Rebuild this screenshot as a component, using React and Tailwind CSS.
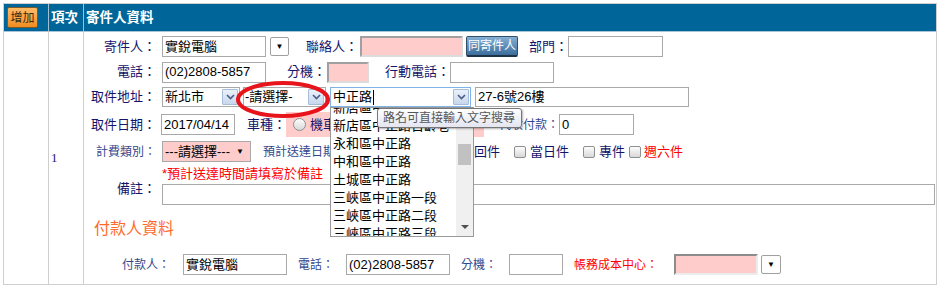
import React from "react";

const Chevron = () => (
  <svg width="9" height="6" viewBox="0 0 9 6">
    <path d="M1 1 L4.5 4.5 L8 1" fill="none" stroke="#4a5f86" strokeWidth="1.6" />
  </svg>
);

function SelArrow() {
  return (
    <span className="flex items-center justify-center w-[16px] h-[16px] border border-[#a7bcd9] bg-linear-to-b from-[#eaf1fa] to-[#c8d7ee] rounded-[1px]">
      <Chevron />
    </span>
  );
}

function Drop({ cls }) {
  return (
    <span className={"flex items-center justify-center border border-[#a0a0a0] bg-white rounded-[2px] text-[8px] text-black " + cls}>▼</span>
  );
}

function Check() {
  return <span className="inline-block w-[12px] h-[12px] rounded-[2px] border border-[#8e8f8f] bg-linear-to-b from-[#fdfdfd] to-[#d8d8d8]" />;
}

const items = [
  "新店區中正路",
  "新店區中正路百齡巷",
  "永和區中正路",
  "中和區中正路",
  "土城區中正路",
  "三峽區中正路一段",
  "三峽區中正路二段",
  "三峽區中正路三段",
];

export default function App() {
  return (
    <div className="relative w-[941px] h-[289px] bg-white overflow-hidden font-['Liberation_Sans','Noto_Sans_CJK_TC',sans-serif]">
      <div className="pt-[3px] pl-[3px]">
        <div className="w-[934px] border border-[#cfcfcf] flex flex-col">
          {/* header */}
          <div className="flex h-[28px] bg-[#006699] border-b border-[#a8c4d6]">
            <div className="w-[45px] border-r border-[#9fbfd3] pl-[3px] pt-[3px]">
              <div className="w-[31px] h-[21px] flex items-center justify-center border border-[#7a5a2a] rounded-[2px] bg-linear-to-b from-[#ffbb66] to-[#f28c1c] text-[12px] leading-[14px] text-[#3a2a10]">
                增加
              </div>
            </div>
            <div className="w-[35px] border-r border-[#9fbfd3] flex items-center pl-[2px] text-white font-bold text-[13.5px] leading-[16px]">
              項次
            </div>
            <div className="flex-1 flex items-center pl-[2px] text-white font-bold text-[13.5px] leading-[16px]">
              寄件人資料
            </div>
          </div>

          {/* body */}
          <div className="flex h-[252px]">
            <div className="w-[45px] border-r border-[#cfcfcf]" />
            <div className="w-[35px] border-r border-[#cfcfcf] flex items-center pl-[2px] font-['Liberation_Serif',serif] text-[13px] text-[#1a1a80]">
              1
            </div>
            <div className="w-[852px] flex flex-col">
              {/* R1 */}
              <div className="h-[29px] flex items-center text-[13px] leading-[16px] whitespace-nowrap">
                <span className="w-[72px] text-right text-[#14146b]">寄件人：</span>
                <span className="ml-[6px] w-[104px] h-[21px] border border-[#a9a9a9] px-[2px] flex items-center text-black">實銳電腦</span>
                <Drop cls="ml-[4px] w-[19px] h-[19px]" />
                <span className="ml-[17px] text-[#14146b]">聯絡人：</span>
                <span className="ml-[2px] w-[103px] h-[21px] border-2 border-t-[#a0a0a0] border-l-[#a0a0a0] border-b-[#dcdcdc] border-r-[#dcdcdc] bg-[#ffcccc]" />
                <span className="ml-[3px] w-[52px] h-[21px] flex items-center justify-center border border-[#33506a] border-b-[#1d3347] border-b-2 rounded-[2px] bg-linear-to-b from-[#86b0d4] to-[#3a6e9c] text-white text-[12px]">同寄件人</span>
                <span className="ml-[11px] text-[#14146b]">部門：</span>
                <span className="w-[95px] h-[21px] border border-[#a9a9a9]" />
              </div>
              {/* R2 */}
              <div className="h-[22px] flex items-center text-[13px] leading-[16px] whitespace-nowrap">
                <span className="w-[72px] text-right text-[#14146b]">電話：</span>
                <span className="ml-[6px] w-[104px] h-[21px] border border-[#a9a9a9] px-[2px] flex items-center text-black">(02)2808-5857</span>
                <span className="ml-[21px] text-[#14146b]">分機：</span>
                <span className="ml-[1px] w-[42px] h-[21px] border-2 border-t-[#a0a0a0] border-l-[#a0a0a0] border-b-[#dcdcdc] border-r-[#dcdcdc] bg-[#ffcccc]" />
                <span className="ml-[16px] text-[#14146b]">行動電話：</span>
                <span className="w-[104px] h-[21px] border border-[#a9a9a9]" />
              </div>
              {/* R3 */}
              <div className="h-[28px] flex items-center text-[13px] leading-[16px] whitespace-nowrap">
                <span className="w-[72px] text-right text-[#14146b]">取件地址：</span>
                <span className="ml-[6px] w-[78px] h-[20px] border border-[#a9a9a9] flex items-center justify-between pl-[2px] pr-[1px] text-black">
                  新北市
                  <SelArrow />
                </span>
                <span className="ml-[3px] w-[83px] h-[20px] border border-[#a9a9a9] flex items-center justify-between pl-[1px] pr-[1px] text-black">
                  -請選擇-
                  <SelArrow />
                </span>
                <span className="relative ml-[4px] w-[141px] h-[20px] border border-[#7eb4ea] flex items-center justify-between pl-[2px] pr-[1px] text-black">
                  <span className="flex items-center">
                    中正路<span className="ml-[1px] w-[1px] h-[15px] bg-black" />
                  </span>
                  <SelArrow />
                  {/* dropdown list */}
                  <div className="absolute left-[-1px] top-[19px] w-[144px] h-[130px] border border-[#9a9a9a] bg-white overflow-hidden z-10">
                    <div className="mt-[-9px]">
                      {items.map((t) => (
                        <div key={t} className="h-[18px] flex items-center pl-[2px] text-[13px] leading-[16px] text-black">
                          {t}
                        </div>
                      ))}
                    </div>
                    <div className="absolute right-0 top-0 w-[17px] h-full bg-[#f0f0f0] flex flex-col items-center">
                      <div className="mt-[36px] w-[13px] h-[21px] bg-[#c1c1c1]" />
                      <div className="mt-[60px] w-0 h-0 border-l-[4px] border-r-[4px] border-t-[4px] border-l-transparent border-r-transparent border-t-[#505050]" />
                    </div>
                  </div>
                  {/* tooltip */}
                  <div className="absolute left-[46px] top-[20px] z-20 w-[145px] h-[20px] flex items-center pl-[5px] border border-[#767676] rounded-[3px] bg-linear-to-b from-[#ffffff] to-[#e4e5f0] shadow-[1px_1px_2px_rgba(0,0,0,0.3)] text-[12px] leading-[14px] text-[#575757]">
                    路名可直接輸入文字搜尋
                  </div>
                </span>
                <span className="ml-[4px] w-[214px] h-[20px] border border-[#a9a9a9] px-[2px] flex items-center text-black">27-6號26樓</span>
              </div>
              {/* R4 */}
              <div className="h-[27px] flex items-center text-[13px] leading-[16px] whitespace-nowrap">
                <span className="w-[72px] text-right text-[#14146b]">取件日期：</span>
                <span className="ml-[5px] w-[74px] h-[21px] border border-[#a9a9a9] px-[2px] flex items-center text-black">2017/04/14</span>
                <span className="ml-[12px] text-[#14146b]">車種：</span>
                <span className="w-[198px] h-[25px] bg-[#ffcccc] flex items-center pl-[7px]">
                  <span className="inline-block w-[13px] h-[13px] rounded-full border border-[#8e8f8f] bg-linear-to-b from-[#fdfdfd] to-[#d8d8d8]" />
                  <span className="ml-[4px] text-[#14146b]">機車</span>
                  <span className="ml-[10px] inline-block w-[13px] h-[13px] rounded-full border border-[#8e8f8f] bg-linear-to-b from-[#fdfdfd] to-[#d8d8d8]" />
                  <span className="ml-[4px] text-[#14146b]">汽車</span>
                </span>
                <span className="ml-[15px] text-[12px] text-[#34478c]">代收付款：</span>
                <span className="w-[75px] h-[21px] border border-[#a9a9a9] px-[2px] flex items-center text-black">0</span>
              </div>
              {/* R5 */}
              <div className="h-[27px] flex items-center text-[13px] leading-[16px] whitespace-nowrap">
                <span className="w-[72px] text-right text-[12px] text-[#34478c]">計費類別：</span>
                <span className="ml-[6px] w-[89px] h-[21px] border border-[#a9a9a9] bg-[#ffcccc] flex items-center justify-between pl-[2px] pr-[6px] text-black">
                  ---請選擇---<span className="text-[8px]">▼</span>
                </span>
                <span className="ml-[12px] w-[211px] text-[12px] text-[#34478c]">預計送達日期：</span>
                <span className="text-[#14146b]">回件</span>
                <span className="ml-[14px] flex"><Check /></span>
                <span className="ml-[4px] text-[#14146b]">當日件</span>
                <span className="ml-[14px] flex"><Check /></span>
                <span className="ml-[4px] text-[#14146b]">專件</span>
                <span className="ml-[4px] flex"><Check /></span>
                <span className="ml-[3px] text-[#ff0000]">週六件</span>
              </div>
              {/* R6 */}
              <div className="h-[18px] flex items-center text-[13px] leading-[16px] whitespace-nowrap">
                <span className="ml-[78px] text-[#ff0000]">*預計送達時間請填寫於備註</span>
              </div>
              {/* R7 */}
              <div className="h-[23px] flex items-start text-[13px] leading-[16px] whitespace-nowrap">
                <span className="w-[72px] text-right text-[#14146b] mt-[-2px]">備註：</span>
                <span className="ml-[6px] mt-[1px] w-[773px] h-[21px] border border-[#a9a9a9]" />
              </div>
              {/* R8 */}
              <div className="h-[40px] pt-[15px] pl-[10px] text-[16px] leading-[16px] text-[#ff6a2b] whitespace-nowrap">
                付款人資料
              </div>
              {/* R9 */}
              <div className="flex-1 flex items-start pt-[8px] text-[12px] leading-[16px] whitespace-nowrap">
                <span className="ml-[38px] h-[21px] flex items-center text-[#34478c]">付款人：</span>
                <span className="ml-[13px] w-[104px] h-[21px] border border-[#a9a9a9] px-[2px] flex items-center text-[13px] text-black">實銳電腦</span>
                <span className="ml-[11px] h-[21px] flex items-center text-[#34478c]">電話：</span>
                <span className="ml-[12px] w-[104px] h-[21px] border border-[#a9a9a9] px-[2px] flex items-center text-[13px] text-black">(02)2808-5857</span>
                <span className="ml-[11px] h-[21px] flex items-center text-[#34478c]">分機：</span>
                <span className="ml-[12px] w-[54px] h-[21px] border border-[#a9a9a9]" />
                <span className="ml-[11px] h-[21px] flex items-center text-[#ff0000]">帳務成本中心：</span>
                <span className="ml-[16px] w-[84px] h-[21px] border-2 border-t-[#8c8c8c] border-l-[#8c8c8c] border-b-[#ececec] border-r-[#ececec] bg-[#ffcccc]" />
                <Drop cls="ml-[3px] w-[20px] h-[19px] mt-[1px]" />
              </div>
            </div>
          </div>
        </div>
      </div>
      {/* red annotation ellipse */}
      <svg className="absolute left-[235px] top-[80px]" width="96" height="40" viewBox="0 0 96 40">
        <ellipse cx="48" cy="19.5" rx="45" ry="16.5" fill="none" stroke="#e8141c" strokeWidth="4" />
      </svg>
    </div>
  );
}
